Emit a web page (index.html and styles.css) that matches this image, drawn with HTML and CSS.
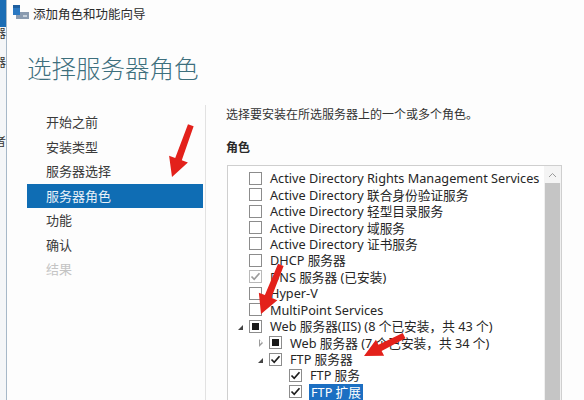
FILE: index.html
```html
<!DOCTYPE html>
<html lang="zh-CN">
<head>
<meta charset="utf-8">
<link rel="stylesheet" href="styles.css">
</head>
<body>
<div class="app">
  <div class="edge">
    <div class="edge-blue"></div>
    <div class="edge-text">器</div>
    <div class="edge-text second">器</div>
    <div class="edge-text third">者</div>
  </div>
  <div class="window">
    <div class="titlebar">
      <svg class="appicon" width="17" height="14" viewBox="0 0 17 14">
        <rect x="0" y="0" width="7" height="10" fill="#2a78c2"/>
        <rect x="0" y="0" width="7" height="3" fill="#1d5e9f"/>
        <rect x="3" y="7" width="13" height="7" fill="#8a9bb0"/>
        <rect x="3" y="7" width="4" height="3" fill="#2a78c2"/>
        <rect x="10" y="10" width="4" height="2" fill="#c6d0da"/>
      </svg>
      <span class="title">添加角色和功能向导</span>
    </div>
    <h1 class="heading">选择服务器角色</h1>
    <div class="content">
      <ul class="nav">
        <li>开始之前</li>
        <li>安装类型</li>
        <li>服务器选择</li>
        <li class="active">服务器角色</li>
        <li>功能</li>
        <li>确认</li>
        <li class="disabled">结果</li>
      </ul>
      <div class="sep"></div>
      <div class="main">
        <p class="desc">选择要安装在所选服务器上的一个或多个角色。</p>
        <h2 class="label">角色</h2>
        <div class="listbox">
          <div class="items">
            <div class="row"><span class="exp"></span><span class="cb"></span><span class="txt">Active Directory Rights Management Services</span></div>
            <div class="row"><span class="exp"></span><span class="cb"></span><span class="txt">Active Directory 联合身份验证服务</span></div>
            <div class="row"><span class="exp"></span><span class="cb"></span><span class="txt">Active Directory 轻型目录服务</span></div>
            <div class="row"><span class="exp"></span><span class="cb"></span><span class="txt">Active Directory 域服务</span></div>
            <div class="row"><span class="exp"></span><span class="cb"></span><span class="txt">Active Directory 证书服务</span></div>
            <div class="row"><span class="exp"></span><span class="cb"></span><span class="txt">DHCP 服务器</span></div>
            <div class="row"><span class="exp"></span><span class="cb disabled"><svg viewBox="0 0 13 13"><path d="M2.5 6.5 L5.2 9.3 L10.5 3.2" class="ck"/></svg></span><span class="txt">DNS 服务器 (已安装)</span></div>
            <div class="row"><span class="exp"></span><span class="cb"></span><span class="txt">Hyper-V</span></div>
            <div class="row"><span class="exp"></span><span class="cb"></span><span class="txt">MultiPoint Services</span></div>
            <div class="row"><span class="exp open"></span><span class="cb"><span class="ind"></span></span><span class="txt">Web 服务器(IIS) (8 个已安装，共 43 个)</span></div>
            <div class="row l1"><span class="exp closed"></span><span class="cb"><span class="ind"></span></span><span class="txt">Web 服务器 (7 个已安装，共 34 个)</span></div>
            <div class="row l1"><span class="exp open"></span><span class="cb"><svg viewBox="0 0 13 13"><path d="M2.5 6.5 L5.2 9.3 L10.5 3.2" class="ck"/></svg></span><span class="txt">FTP 服务器</span></div>
            <div class="row l2"><span class="exp"></span><span class="cb"><svg viewBox="0 0 13 13"><path d="M2.5 6.5 L5.2 9.3 L10.5 3.2" class="ck"/></svg></span><span class="txt">FTP 服务</span></div>
            <div class="row l2"><span class="exp"></span><span class="cb"><svg viewBox="0 0 13 13"><path d="M2.5 6.5 L5.2 9.3 L10.5 3.2" class="ck"/></svg></span><span class="txt sel">FTP 扩展</span></div>
          </div>
          <div class="scrollbar">
            <div class="sb-btn"><svg width="9" height="6" viewBox="0 0 9 6"><path d="M1 5 L4.5 1.5 L8 5" fill="none" stroke="#9a9a9a" stroke-width="1"/></svg></div>
            <div class="sb-thumb"></div>
          </div>
        </div>
      </div>
    </div>
  </div>
</div>
<svg class="arrows" width="584" height="400" viewBox="0 0 584 400">
  <g fill="#e3211b">
    <polygon transform="translate(172 177) rotate(110)" points="-55,-3 -19,-3.5 -19,-10 0,0 -19,10 -19,3.5 -55,3"/>
    <polygon transform="translate(261 314) rotate(112)" points="-53,-3 -19,-3.5 -19,-10 0,0 -19,10 -19,3.5 -53,3"/>
    <polygon transform="translate(364 356) rotate(153)" points="-45,-3 -18,-3.5 -18,-9 0,0 -18,9 -18,3.5 -45,3"/>
  </g>
</svg>
</body>
</html>
```

FILE: styles.css
```css
html, body {
  margin: 0;
  padding: 0;
}
body {
  width: 584px;
  height: 400px;
  overflow: hidden;
  position: relative;
  background: #fdfdfd;
  font-family: "Segoe UI", "Noto Sans", "Noto Sans CJK SC", sans-serif;
  color: #333;
}
.app {
  display: flex;
  height: 400px;
  overflow: hidden;
}
.edge {
  width: 6px;
  flex: none;
  background: #f4f6f8;
  border-right: 1px solid #a6b8c8;
  overflow: hidden;
  position: relative;
}
.edge-blue {
  height: 27px;
  background: #1b6db5;
}
.edge-text {
  font-family: "Noto Sans CJK SC", sans-serif;
  font-size: 12px;
  line-height: 12px;
  height: 12px;
  margin-left: -6px;
  color: #333;
}
.edge-text.second {
  margin-top: 17px;
}
.edge-text.third {
  margin-top: 67px;
}
.window {
  flex: 1;
  display: flex;
  flex-direction: column;
  background: #fdfdfd;
  overflow: hidden;
}
.titlebar {
  flex: none;
  height: 27px;
  display: flex;
  align-items: center;
  padding-left: 6px;
  gap: 3px;
}
.appicon {
  display: block;
  margin-top: -3px;
}
.title {
  font-family: "Noto Sans CJK SC", sans-serif;
  font-size: 12.5px;
  color: #2b2b2b;
}
.heading {
  flex: none;
  margin: 0;
  padding-left: 20px;
  margin-top: 24px;
  height: 34px;
  line-height: 34px;
  font-family: "Noto Sans CJK SC", sans-serif;
  font-weight: 300;
  font-size: 24.5px;
  color: #3d6f7d;
}
.content {
  display: flex;
  margin-top: 20px;
  flex: 1;
  min-height: 0;
}
.nav {
  list-style: none;
  margin: 0;
  padding: 5px 0 0;
  margin-left: 20px;
  width: 176px;
}
.nav li {
  height: 24.5px;
  line-height: 24.5px;
  padding-left: 19px;
  font-family: "Noto Sans CJK SC", sans-serif;
  font-size: 13px;
  color: #3a3a3a;
}
.nav li.active {
  background: #0f6db4;
  color: #e8f1f8;
}
.nav li.disabled {
  color: #c4c4c4;
}
.sep {
  width: 1px;
  background: #e2e2e2;
  margin-left: 2px;
}
.main {
  padding-left: 20px;
  flex: 1;
  display: flex;
  flex-direction: column;
  min-height: 0;
}
.desc {
  flex: none;
  margin: 0;
  height: 18px;
  line-height: 18px;
  font-family: "Noto Sans CJK SC", sans-serif;
  font-size: 12px;
  color: #333;
}
.label {
  flex: none;
  margin: 15px 0 0;
  height: 18px;
  line-height: 18px;
  font-family: "Noto Sans CJK SC", sans-serif;
  font-size: 12px;
  font-weight: 700;
  color: #2a2a2a;
}
.listbox {
  margin-top: 9px;
  margin-left: 1px;
  width: 333px;
  flex: 1;
  min-height: 0;
  border: 1px solid #cfcfcf;
  border-bottom: none;
  background: #fff;
  display: flex;
  overflow: hidden;
}
.items {
  flex: 1;
  padding-top: 4px;
  padding-left: 9px;
}
.row {
  height: 16.45px;
  display: flex;
  align-items: center;
  white-space: nowrap;
  font-size: 12.7px;
  color: #262626;
}
.row.l1 { padding-left: 20px; }
.row.l2 { padding-left: 40px; }
.exp {
  width: 12px;
  height: 13px;
  flex: none;
  position: relative;
}
.exp.open::before {
  content: "";
  position: absolute;
  left: 1px;
  top: 5px;
  width: 0;
  height: 0;
  border-left: 5px solid transparent;
  border-bottom: 5px solid #444;
}
.exp.closed::before {
  content: "";
  position: absolute;
  left: 2px;
  top: 2.5px;
  width: 0;
  height: 0;
  border-top: 4px solid transparent;
  border-bottom: 4px solid transparent;
  border-left: 4px solid #9a9a9a;
}
.exp.closed::after {
  content: "";
  position: absolute;
  left: 3px;
  top: 4px;
  width: 0;
  height: 0;
  border-top: 2.5px solid transparent;
  border-bottom: 2.5px solid transparent;
  border-left: 2.5px solid #fff;
}
.cb {
  width: 11px;
  height: 11px;
  border: 1px solid #8c8c8c;
  background: #fff;
  flex: none;
  display: flex;
  align-items: center;
  justify-content: center;
  position: relative;
}
.cb svg {
  position: absolute;
  left: -1px;
  top: -1px;
  width: 13px;
  height: 13px;
}
.ck {
  fill: none;
  stroke: #1e1e1e;
  stroke-width: 1.7;
}
.cb.disabled {
  border-color: #b8b8b8;
}
.cb.disabled .ck {
  stroke: #9c9c9c;
}
.ind {
  width: 7px;
  height: 7px;
  background: #1a1a1a;
}
.txt {
  margin-left: 8px;
  font-family: "Segoe UI", "Noto Sans", "Noto Sans CJK SC", sans-serif;
  line-height: 16px;
}
.txt.sel {
  background: #1c6fc2;
  color: #fff;
  padding: 0 2px;
  margin-left: 7px;
}
.scrollbar {
  width: 17px;
  flex: none;
  display: flex;
  flex-direction: column;
  background: #f0f0f0;
}
.sb-btn {
  height: 17px;
  display: flex;
  align-items: center;
  justify-content: center;
  background: #f4f4f4;
}
.sb-thumb {
  flex: 1;
  background: #c5c5c5;
  margin: 0 1px;
}
.arrows {
  position: absolute;
  left: 0;
  top: 0;
  pointer-events: none;
}
```
